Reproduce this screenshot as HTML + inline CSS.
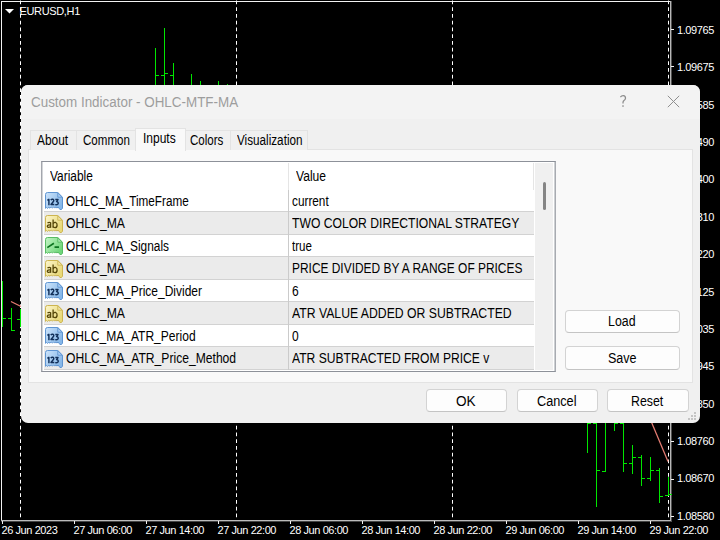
<!DOCTYPE html>
<html><head><meta charset="utf-8">
<style>
*{margin:0;padding:0;box-sizing:border-box}
html,body{width:720px;height:540px;overflow:hidden;background:#000}
body{position:relative;font-family:"Liberation Sans",sans-serif}
.abs{position:absolute}
.t{position:absolute;white-space:nowrap}
.ic{position:absolute}
svg.chart{position:absolute;left:0;top:0}
.btn{position:absolute;background:#fdfdfd;border:1px solid #d3d3d3;border-bottom-color:#c4c4c4;border-radius:4px}
</style></head><body>
<svg class="chart" width="720" height="540" viewBox="0 0 720 540">
<g fill="#f2f2f2" shape-rendering="crispEdges">
<rect x="1" y="1" width="670" height="1"/>
<rect x="1" y="1" width="1" height="520"/>
<rect x="670" y="1" width="1" height="521" fill="#b8b8b8"/>
<rect x="671" y="1" width="1" height="521" fill="#505050"/>
<rect x="1" y="520" width="670" height="1" fill="#bbbbbb"/>
<rect x="1" y="521" width="670" height="1" fill="#454545"/>
<rect x="671" y="29" width="3" height="1"/><rect x="671" y="66" width="3" height="1"/><rect x="671" y="104" width="3" height="1"/><rect x="671" y="141" width="3" height="1"/><rect x="671" y="179" width="3" height="1"/><rect x="671" y="216" width="3" height="1"/><rect x="671" y="254" width="3" height="1"/><rect x="671" y="291" width="3" height="1"/><rect x="671" y="329" width="3" height="1"/><rect x="671" y="366" width="3" height="1"/><rect x="671" y="404" width="3" height="1"/><rect x="671" y="441" width="3" height="1"/><rect x="671" y="479" width="3" height="1"/><rect x="671" y="516" width="3" height="1"/><rect x="2" y="521" width="1" height="3"/><rect x="74" y="521" width="1" height="3"/><rect x="146" y="521" width="1" height="3"/><rect x="218" y="521" width="1" height="3"/><rect x="290" y="521" width="1" height="3"/><rect x="362" y="521" width="1" height="3"/><rect x="434" y="521" width="1" height="3"/><rect x="506" y="521" width="1" height="3"/><rect x="578" y="521" width="1" height="3"/><rect x="650" y="521" width="1" height="3"/>
</g>
<g stroke="#fff" stroke-width="1" stroke-dasharray="3.75 3">
<line x1="20.5" y1="0.5" x2="20.5" y2="520"/>
<line x1="236.5" y1="0.5" x2="236.5" y2="520"/>
<line x1="452.5" y1="0.5" x2="452.5" y2="520"/>
<line x1="668.5" y1="0.5" x2="668.5" y2="520"/>
</g>
<g fill="#00e600" shape-rendering="crispEdges"><rect x="2" y="281" width="1" height="46"/><rect x="3" y="318" width="3" height="1"/><rect x="11" y="308" width="1" height="23"/><rect x="8" y="318" width="3" height="1"/><rect x="12" y="330" width="3" height="1"/><rect x="20" y="309" width="1" height="18"/><rect x="17" y="319" width="3" height="1"/><rect x="155" y="48" width="1" height="53"/><rect x="156" y="75" width="3" height="1"/><rect x="164" y="28" width="1" height="73"/><rect x="161" y="75" width="3" height="1"/><rect x="165" y="73" width="3" height="1"/><rect x="173" y="63" width="1" height="38"/><rect x="170" y="75" width="3" height="1"/><rect x="191" y="74" width="1" height="27"/><rect x="200" y="81" width="1" height="20"/><rect x="218" y="81" width="1" height="20"/><rect x="227" y="84" width="1" height="17"/><rect x="587" y="400" width="1" height="53"/><rect x="588" y="423" width="3" height="1"/><rect x="596" y="400" width="1" height="107"/><rect x="593" y="423" width="3" height="1"/><rect x="597" y="470" width="3" height="1"/><rect x="605" y="400" width="1" height="72"/><rect x="602" y="471" width="3" height="1"/><rect x="614" y="400" width="1" height="31"/><rect x="615" y="423" width="3" height="1"/><rect x="623" y="400" width="1" height="72"/><rect x="620" y="423" width="3" height="1"/><rect x="624" y="463" width="3" height="1"/><rect x="632" y="445" width="1" height="29"/><rect x="629" y="463" width="3" height="1"/><rect x="633" y="457" width="3" height="1"/><rect x="641" y="455" width="1" height="31"/><rect x="638" y="457" width="3" height="1"/><rect x="642" y="478" width="3" height="1"/><rect x="650" y="457" width="1" height="24"/><rect x="647" y="478" width="3" height="1"/><rect x="651" y="470" width="3" height="1"/><rect x="659" y="468" width="1" height="35"/><rect x="656" y="470" width="3" height="1"/><rect x="660" y="496" width="3" height="1"/><rect x="668" y="477" width="1" height="19"/><rect x="665" y="495" width="3" height="1"/><rect x="669" y="494" width="3" height="1"/></g>
<g stroke="#e57c72" stroke-width="1.25" fill="none">
<line x1="11" y1="301.5" x2="21" y2="306.5"/>
<line x1="651.4" y1="422" x2="668" y2="461.5"/>
</g>
<path d="M5 9 H14 L9.5 13.5 Z" fill="#fff"/>
</svg>
<div class="t" style="left:677px;top:23.19px;font-size:11px;line-height:14px;color:#fff;letter-spacing:-0.4px;">1.09765</div><div class="t" style="left:677px;top:60.19px;font-size:11px;line-height:14px;color:#fff;letter-spacing:-0.4px;">1.09675</div><div class="t" style="left:677px;top:98.19px;font-size:11px;line-height:14px;color:#fff;letter-spacing:-0.4px;">1.09585</div><div class="t" style="left:677px;top:135.19px;font-size:11px;line-height:14px;color:#fff;letter-spacing:-0.4px;">1.09490</div><div class="t" style="left:677px;top:172.19px;font-size:11px;line-height:14px;color:#fff;letter-spacing:-0.4px;">1.09400</div><div class="t" style="left:677px;top:210.19px;font-size:11px;line-height:14px;color:#fff;letter-spacing:-0.4px;">1.09310</div><div class="t" style="left:677px;top:247.19px;font-size:11px;line-height:14px;color:#fff;letter-spacing:-0.4px;">1.09220</div><div class="t" style="left:677px;top:285.19px;font-size:11px;line-height:14px;color:#fff;letter-spacing:-0.4px;">1.09125</div><div class="t" style="left:677px;top:322.19px;font-size:11px;line-height:14px;color:#fff;letter-spacing:-0.4px;">1.09035</div><div class="t" style="left:677px;top:359.19px;font-size:11px;line-height:14px;color:#fff;letter-spacing:-0.4px;">1.08945</div><div class="t" style="left:677px;top:397.19px;font-size:11px;line-height:14px;color:#fff;letter-spacing:-0.4px;">1.08850</div><div class="t" style="left:677px;top:434.19px;font-size:11px;line-height:14px;color:#fff;letter-spacing:-0.4px;">1.08760</div><div class="t" style="left:677px;top:471.19px;font-size:11px;line-height:14px;color:#fff;letter-spacing:-0.4px;">1.08670</div><div class="t" style="left:677px;top:509.19px;font-size:11px;line-height:14px;color:#fff;letter-spacing:-0.4px;">1.08580</div><div class="t" style="left:1.5px;top:523.19px;font-size:11px;line-height:14px;color:#fff;letter-spacing:-0.42px;">26 Jun 2023</div><div class="t" style="left:73.5px;top:523.19px;font-size:11px;line-height:14px;color:#fff;letter-spacing:-0.42px;">27 Jun 06:00</div><div class="t" style="left:145.5px;top:523.19px;font-size:11px;line-height:14px;color:#fff;letter-spacing:-0.42px;">27 Jun 14:00</div><div class="t" style="left:217.5px;top:523.19px;font-size:11px;line-height:14px;color:#fff;letter-spacing:-0.42px;">27 Jun 22:00</div><div class="t" style="left:289.5px;top:523.19px;font-size:11px;line-height:14px;color:#fff;letter-spacing:-0.42px;">28 Jun 06:00</div><div class="t" style="left:361.5px;top:523.19px;font-size:11px;line-height:14px;color:#fff;letter-spacing:-0.42px;">28 Jun 14:00</div><div class="t" style="left:433.5px;top:523.19px;font-size:11px;line-height:14px;color:#fff;letter-spacing:-0.42px;">28 Jun 22:00</div><div class="t" style="left:505.5px;top:523.19px;font-size:11px;line-height:14px;color:#fff;letter-spacing:-0.42px;">29 Jun 06:00</div><div class="t" style="left:577.5px;top:523.19px;font-size:11px;line-height:14px;color:#fff;letter-spacing:-0.42px;">29 Jun 14:00</div><div class="t" style="left:649.5px;top:523.19px;font-size:11px;line-height:14px;color:#fff;letter-spacing:-0.42px;">29 Jun 22:00</div><div class="t" style="left:19.5px;top:4.19px;font-size:11px;line-height:14px;color:#fff;letter-spacing:-0.35px;">EURUSD,H1</div>
<div class="abs" style="left:21px;top:85px;width:679px;height:338px;background:#f0f0f0;border-radius:7px;overflow:hidden">
 <div class="abs" style="left:0;top:0;width:679px;height:34px;background:#f3f3f3"></div>
</div>
<div class="t" style="left:30.5px;top:93.15px;font-size:14px;line-height:18px;color:#9d9d9d;transform:scaleX(0.9577);transform-origin:0 0;">Custom Indicator - OHLC-MTF-MA</div>
<svg class="abs" style="left:618px;top:94px" width="10" height="14" viewBox="0 0 10 14"><path d="M2.4 3.2 Q3.6 1.6 5.3 1.7 Q7.6 2 7.5 4.2 Q7.4 5.6 6 6.6 Q5 7.4 5 8.6 V9.6" stroke="#8c8c8c" stroke-width="1.25" fill="none"/><rect x="4.3" y="11.3" width="1.4" height="1.5" fill="#8c8c8c"/></svg>
<svg class="abs" style="left:667px;top:95px" width="13" height="13" viewBox="0 0 13 13"><path d="M0.8 0.8 L12.2 12.2 M12.2 0.8 L0.8 12.2" stroke="#8e8e8e" stroke-width="1"/></svg>
<!-- panel -->
<div class="abs" style="left:28px;top:149px;width:665px;height:234px;background:#f9f9f9;border:1px solid #e3e3e3"></div>
<!-- tabs -->
<div class="abs" style="left:30px;top:130px;width:47px;height:20px;background:#f0f0f0;border:1px solid #e3e3e3;border-bottom:none"></div>
<div class="abs" style="left:76px;top:130px;width:60px;height:20px;background:#f0f0f0;border:1px solid #e3e3e3;border-bottom:none"></div>
<div class="abs" style="left:185px;top:130px;width:46px;height:20px;background:#f0f0f0;border:1px solid #e3e3e3;border-bottom:none"></div>
<div class="abs" style="left:230px;top:130px;width:78px;height:20px;background:#f0f0f0;border:1px solid #e3e3e3;border-bottom:none"></div>
<div class="abs" style="left:135px;top:128px;width:51px;height:23px;background:#f9f9f9;border:1px solid #e3e3e3;border-bottom:none"></div>
<div class="t" style="left:36.6px;top:131.15px;font-size:14px;line-height:18px;color:#000;transform:scaleX(0.8501);transform-origin:0 0;">About</div>
<div class="t" style="left:83px;top:131.15px;font-size:14px;line-height:18px;color:#000;transform:scaleX(0.8258);transform-origin:0 0;">Common</div>
<div class="t" style="left:143.4px;top:129.15px;font-size:14px;line-height:18px;color:#000;transform:scaleX(0.8574);transform-origin:0 0;">Inputs</div>
<div class="t" style="left:190px;top:131.15px;font-size:14px;line-height:18px;color:#000;transform:scaleX(0.8256);transform-origin:0 0;">Colors</div>
<div class="t" style="left:237.3px;top:131.15px;font-size:14px;line-height:18px;color:#000;transform:scaleX(0.836);transform-origin:0 0;">Visualization</div>
<!-- list -->
<div class="abs" style="left:41px;top:161px;width:515px;height:211px;background:#fff;border:1px solid #8d9199;border-left-color:#a3a6ad;border-right-color:#a8abb1;box-shadow:inset 1px 0 0 #d3d5d8,inset -1px 0 0 #cdd0d3"></div>
<div class="abs" style="left:288px;top:163px;width:1px;height:27px;background:#e5e5e5"></div>
<div class="abs" style="left:533px;top:163px;width:1px;height:27px;background:#e5e5e5"></div>
<div class="t" style="left:49.6px;top:167.15px;font-size:14px;line-height:18px;color:#000;transform:scaleX(0.8505);transform-origin:0 0;">Variable</div>
<div class="t" style="left:295.6px;top:167.15px;font-size:14px;line-height:18px;color:#000;transform:scaleX(0.8629);transform-origin:0 0;">Value</div>
<div class="abs" style="left:44px;top:211px;width:490px;height:24px;background:#ebebeb;border-top:1px solid #d2d2d2;border-bottom:1px solid #d2d2d2"></div><div class="abs" style="left:44px;top:256px;width:490px;height:24px;background:#ebebeb;border-top:1px solid #d2d2d2;border-bottom:1px solid #d2d2d2"></div><div class="abs" style="left:44px;top:301px;width:490px;height:24px;background:#ebebeb;border-top:1px solid #d2d2d2;border-bottom:1px solid #d2d2d2"></div><div class="abs" style="left:44px;top:346px;width:490px;height:24px;background:#ebebeb;border-top:1px solid #d2d2d2;border-bottom:1px solid #d2d2d2"></div><svg class="ic" style="left:45px;top:192px" width="18" height="18" viewBox="0 0 18 18"><defs><linearGradient id="gn192" x1="0" y1="0" x2="1" y2="0.6"><stop offset="0" stop-color="#cde4fb"/><stop offset="1" stop-color="#86b7e8"/></linearGradient></defs><path d="M0.5 2.5 Q0.5 0.5 2.5 0.5 H12.8 L17.5 5.2 V16.2 L16.6 17.4 L15 17.6 L14 16.2 L13 15 L11.9 16.1 L10.9 14.9 L9.8 16.1 L8.6 14.9 L7.4 16.1 L6.2 15 L5 16.2 L3.8 15.2 L2.6 16.4 L1.5 15.4 L0.5 16.4 Z" fill="url(#gn192)" stroke="#5f95d2" stroke-width="1"/><path d="M12.8 0.9 V5.2 H17.1 Z" fill="#b0d0f2" stroke="#5f95d2" stroke-width="0.9" stroke-linejoin="round"/><g stroke="#12305a" stroke-width="1.45" fill="none" stroke-linejoin="round"><path d="M2.4 8.3 L3.9 7.3 V13.2"/><path d="M5.7 8.1 Q6.6 7.1 7.8 7.3 Q9.2 7.7 8.6 9.2 L6 12.5 H9.3"/><path d="M10.3 7.5 H13 L11.6 9.6 Q13.4 9.8 13.2 11.6 Q12.8 13.1 10.2 12.6"/></g></svg><div class="t" style="left:66.3px;top:192.15px;font-size:14px;line-height:18px;color:#000;transform:scaleX(0.8375);transform-origin:0 0;">OHLC_MA_TimeFrame</div><div class="t" style="left:292px;top:192.15px;font-size:14px;line-height:18px;color:#000;transform:scaleX(0.8423);transform-origin:0 0;">current</div><svg class="ic" style="left:45px;top:215px" width="18" height="18" viewBox="0 0 18 18"><defs><linearGradient id="gab215" x1="0" y1="0" x2="1" y2="0.6"><stop offset="0" stop-color="#fcf5cc"/><stop offset="1" stop-color="#e8d877"/></linearGradient></defs><path d="M0.5 2.5 Q0.5 0.5 2.5 0.5 H12.8 L17.5 5.2 V16.2 L16.6 17.4 L15 17.6 L14 16.2 L13 15 L11.9 16.1 L10.9 14.9 L9.8 16.1 L8.6 14.9 L7.4 16.1 L6.2 15 L5 16.2 L3.8 15.2 L2.6 16.4 L1.5 15.4 L0.5 16.4 Z" fill="url(#gab215)" stroke="#cdb550" stroke-width="1"/><path d="M12.8 0.9 V5.2 H17.1 Z" fill="#f2e8b0" stroke="#cdb550" stroke-width="0.9" stroke-linejoin="round"/><g stroke="#564709" stroke-width="1.3" fill="none"><path d="M2.5 7.9 Q4.3 6.9 5.6 7.8 V12.8"/><path d="M5.6 9.8 Q2.3 9.6 2.3 11.3 Q2.6 13 5.6 11.9"/><path d="M8.1 4.6 V12.7"/><path d="M8.1 8.6 Q9.2 7.1 10.7 7.5 Q12.2 8.1 12.1 10.1 Q11.9 12.7 9.9 12.7 Q8.6 12.7 8.1 11.6"/></g></svg><div class="t" style="left:66.3px;top:214.15px;font-size:14px;line-height:18px;color:#000;transform:scaleX(0.8717);transform-origin:0 0;">OHLC_MA</div><div class="t" style="left:292px;top:214.15px;font-size:14px;line-height:18px;color:#000;transform:scaleX(0.8673);transform-origin:0 0;">TWO COLOR DIRECTIONAL STRATEGY</div><svg class="ic" style="left:45px;top:237px" width="18" height="18" viewBox="0 0 18 18"><defs><linearGradient id="gb237" x1="0" y1="0" x2="1" y2="0.6"><stop offset="0" stop-color="#c4f5c6"/><stop offset="1" stop-color="#6fd67a"/></linearGradient></defs><path d="M0.5 2.5 Q0.5 0.5 2.5 0.5 H12.8 L17.5 5.2 V16.2 L16.6 17.4 L15 17.6 L14 16.2 L13 15 L11.9 16.1 L10.9 14.9 L9.8 16.1 L8.6 14.9 L7.4 16.1 L6.2 15 L5 16.2 L3.8 15.2 L2.6 16.4 L1.5 15.4 L0.5 16.4 Z" fill="url(#gb237)" stroke="#58bc64" stroke-width="1"/><path d="M12.8 0.9 V5.2 H17.1 Z" fill="#aee9b2" stroke="#58bc64" stroke-width="0.9" stroke-linejoin="round"/><path d="M2.3 10.6 L8.9 6.3 M10.4 9.3 V10.2 H14" stroke="#0d7420" stroke-width="1.7" fill="none"/></svg><div class="t" style="left:66.3px;top:237.15px;font-size:14px;line-height:18px;color:#000;transform:scaleX(0.8485);transform-origin:0 0;">OHLC_MA_Signals</div><div class="t" style="left:292px;top:237.15px;font-size:14px;line-height:18px;color:#000;transform:scaleX(0.8249);transform-origin:0 0;">true</div><svg class="ic" style="left:45px;top:260px" width="18" height="18" viewBox="0 0 18 18"><defs><linearGradient id="gab260" x1="0" y1="0" x2="1" y2="0.6"><stop offset="0" stop-color="#fcf5cc"/><stop offset="1" stop-color="#e8d877"/></linearGradient></defs><path d="M0.5 2.5 Q0.5 0.5 2.5 0.5 H12.8 L17.5 5.2 V16.2 L16.6 17.4 L15 17.6 L14 16.2 L13 15 L11.9 16.1 L10.9 14.9 L9.8 16.1 L8.6 14.9 L7.4 16.1 L6.2 15 L5 16.2 L3.8 15.2 L2.6 16.4 L1.5 15.4 L0.5 16.4 Z" fill="url(#gab260)" stroke="#cdb550" stroke-width="1"/><path d="M12.8 0.9 V5.2 H17.1 Z" fill="#f2e8b0" stroke="#cdb550" stroke-width="0.9" stroke-linejoin="round"/><g stroke="#564709" stroke-width="1.3" fill="none"><path d="M2.5 7.9 Q4.3 6.9 5.6 7.8 V12.8"/><path d="M5.6 9.8 Q2.3 9.6 2.3 11.3 Q2.6 13 5.6 11.9"/><path d="M8.1 4.6 V12.7"/><path d="M8.1 8.6 Q9.2 7.1 10.7 7.5 Q12.2 8.1 12.1 10.1 Q11.9 12.7 9.9 12.7 Q8.6 12.7 8.1 11.6"/></g></svg><div class="t" style="left:66.3px;top:259.15px;font-size:14px;line-height:18px;color:#000;transform:scaleX(0.8717);transform-origin:0 0;">OHLC_MA</div><div class="t" style="left:292px;top:259.15px;font-size:14px;line-height:18px;color:#000;transform:scaleX(0.8517);transform-origin:0 0;">PRICE DIVIDED BY A RANGE OF PRICES</div><svg class="ic" style="left:45px;top:282px" width="18" height="18" viewBox="0 0 18 18"><defs><linearGradient id="gn282" x1="0" y1="0" x2="1" y2="0.6"><stop offset="0" stop-color="#cde4fb"/><stop offset="1" stop-color="#86b7e8"/></linearGradient></defs><path d="M0.5 2.5 Q0.5 0.5 2.5 0.5 H12.8 L17.5 5.2 V16.2 L16.6 17.4 L15 17.6 L14 16.2 L13 15 L11.9 16.1 L10.9 14.9 L9.8 16.1 L8.6 14.9 L7.4 16.1 L6.2 15 L5 16.2 L3.8 15.2 L2.6 16.4 L1.5 15.4 L0.5 16.4 Z" fill="url(#gn282)" stroke="#5f95d2" stroke-width="1"/><path d="M12.8 0.9 V5.2 H17.1 Z" fill="#b0d0f2" stroke="#5f95d2" stroke-width="0.9" stroke-linejoin="round"/><g stroke="#12305a" stroke-width="1.45" fill="none" stroke-linejoin="round"><path d="M2.4 8.3 L3.9 7.3 V13.2"/><path d="M5.7 8.1 Q6.6 7.1 7.8 7.3 Q9.2 7.7 8.6 9.2 L6 12.5 H9.3"/><path d="M10.3 7.5 H13 L11.6 9.6 Q13.4 9.8 13.2 11.6 Q12.8 13.1 10.2 12.6"/></g></svg><div class="t" style="left:66.3px;top:282.15px;font-size:14px;line-height:18px;color:#000;transform:scaleX(0.8569);transform-origin:0 0;">OHLC_MA_Price_Divider</div><div class="t" style="left:292px;top:282.15px;font-size:14px;line-height:18px;color:#000;transform:scaleX(0.86);transform-origin:0 0;">6</div><svg class="ic" style="left:45px;top:305px" width="18" height="18" viewBox="0 0 18 18"><defs><linearGradient id="gab305" x1="0" y1="0" x2="1" y2="0.6"><stop offset="0" stop-color="#fcf5cc"/><stop offset="1" stop-color="#e8d877"/></linearGradient></defs><path d="M0.5 2.5 Q0.5 0.5 2.5 0.5 H12.8 L17.5 5.2 V16.2 L16.6 17.4 L15 17.6 L14 16.2 L13 15 L11.9 16.1 L10.9 14.9 L9.8 16.1 L8.6 14.9 L7.4 16.1 L6.2 15 L5 16.2 L3.8 15.2 L2.6 16.4 L1.5 15.4 L0.5 16.4 Z" fill="url(#gab305)" stroke="#cdb550" stroke-width="1"/><path d="M12.8 0.9 V5.2 H17.1 Z" fill="#f2e8b0" stroke="#cdb550" stroke-width="0.9" stroke-linejoin="round"/><g stroke="#564709" stroke-width="1.3" fill="none"><path d="M2.5 7.9 Q4.3 6.9 5.6 7.8 V12.8"/><path d="M5.6 9.8 Q2.3 9.6 2.3 11.3 Q2.6 13 5.6 11.9"/><path d="M8.1 4.6 V12.7"/><path d="M8.1 8.6 Q9.2 7.1 10.7 7.5 Q12.2 8.1 12.1 10.1 Q11.9 12.7 9.9 12.7 Q8.6 12.7 8.1 11.6"/></g></svg><div class="t" style="left:66.3px;top:304.15px;font-size:14px;line-height:18px;color:#000;transform:scaleX(0.8717);transform-origin:0 0;">OHLC_MA</div><div class="t" style="left:292px;top:304.15px;font-size:14px;line-height:18px;color:#000;transform:scaleX(0.8732);transform-origin:0 0;">ATR VALUE ADDED OR SUBTRACTED</div><svg class="ic" style="left:45px;top:327px" width="18" height="18" viewBox="0 0 18 18"><defs><linearGradient id="gn327" x1="0" y1="0" x2="1" y2="0.6"><stop offset="0" stop-color="#cde4fb"/><stop offset="1" stop-color="#86b7e8"/></linearGradient></defs><path d="M0.5 2.5 Q0.5 0.5 2.5 0.5 H12.8 L17.5 5.2 V16.2 L16.6 17.4 L15 17.6 L14 16.2 L13 15 L11.9 16.1 L10.9 14.9 L9.8 16.1 L8.6 14.9 L7.4 16.1 L6.2 15 L5 16.2 L3.8 15.2 L2.6 16.4 L1.5 15.4 L0.5 16.4 Z" fill="url(#gn327)" stroke="#5f95d2" stroke-width="1"/><path d="M12.8 0.9 V5.2 H17.1 Z" fill="#b0d0f2" stroke="#5f95d2" stroke-width="0.9" stroke-linejoin="round"/><g stroke="#12305a" stroke-width="1.45" fill="none" stroke-linejoin="round"><path d="M2.4 8.3 L3.9 7.3 V13.2"/><path d="M5.7 8.1 Q6.6 7.1 7.8 7.3 Q9.2 7.7 8.6 9.2 L6 12.5 H9.3"/><path d="M10.3 7.5 H13 L11.6 9.6 Q13.4 9.8 13.2 11.6 Q12.8 13.1 10.2 12.6"/></g></svg><div class="t" style="left:66.3px;top:327.15px;font-size:14px;line-height:18px;color:#000;transform:scaleX(0.8601);transform-origin:0 0;">OHLC_MA_ATR_Period</div><div class="t" style="left:292px;top:327.15px;font-size:14px;line-height:18px;color:#000;transform:scaleX(0.86);transform-origin:0 0;">0</div><svg class="ic" style="left:45px;top:350px" width="18" height="18" viewBox="0 0 18 18"><defs><linearGradient id="gn350" x1="0" y1="0" x2="1" y2="0.6"><stop offset="0" stop-color="#cde4fb"/><stop offset="1" stop-color="#86b7e8"/></linearGradient></defs><path d="M0.5 2.5 Q0.5 0.5 2.5 0.5 H12.8 L17.5 5.2 V16.2 L16.6 17.4 L15 17.6 L14 16.2 L13 15 L11.9 16.1 L10.9 14.9 L9.8 16.1 L8.6 14.9 L7.4 16.1 L6.2 15 L5 16.2 L3.8 15.2 L2.6 16.4 L1.5 15.4 L0.5 16.4 Z" fill="url(#gn350)" stroke="#5f95d2" stroke-width="1"/><path d="M12.8 0.9 V5.2 H17.1 Z" fill="#b0d0f2" stroke="#5f95d2" stroke-width="0.9" stroke-linejoin="round"/><g stroke="#12305a" stroke-width="1.45" fill="none" stroke-linejoin="round"><path d="M2.4 8.3 L3.9 7.3 V13.2"/><path d="M5.7 8.1 Q6.6 7.1 7.8 7.3 Q9.2 7.7 8.6 9.2 L6 12.5 H9.3"/><path d="M10.3 7.5 H13 L11.6 9.6 Q13.4 9.8 13.2 11.6 Q12.8 13.1 10.2 12.6"/></g></svg><div class="t" style="left:66.3px;top:349.15px;font-size:14px;line-height:18px;color:#000;transform:scaleX(0.8652);transform-origin:0 0;">OHLC_MA_ATR_Price_Method</div><div class="t" style="left:292px;top:349.15px;font-size:14px;line-height:18px;color:#000;transform:scaleX(0.8638);transform-origin:0 0;">ATR SUBTRACTED FROM PRICE v</div>
<div class="abs" style="left:288px;top:190px;width:1px;height:180px;background:#cbcbcb"></div>
<div class="abs" style="left:535px;top:163px;width:18px;height:207px;background:#f0f0f0"></div>
<div class="abs" style="left:543px;top:182px;width:3px;height:28px;background:#858585;border-radius:1.5px"></div>
<!-- buttons -->
<div class="btn" style="left:565px;top:310px;width:115px;height:23px"></div>
<div class="btn" style="left:565px;top:346px;width:115px;height:24px"></div>
<div class="btn" style="left:426px;top:389px;width:81px;height:23px"></div>
<div class="btn" style="left:517px;top:389px;width:81px;height:23px"></div>
<div class="btn" style="left:607px;top:389px;width:82px;height:23px"></div>
<div class="t" style="left:607.5px;top:312.15px;font-size:14px;line-height:18px;color:#000;transform:scaleX(0.883);transform-origin:0 0;">Load</div>
<div class="t" style="left:607.8px;top:349.15px;font-size:14px;line-height:18px;color:#000;transform:scaleX(0.8963);transform-origin:0 0;">Save</div>
<div class="t" style="left:456px;top:392.15px;font-size:14px;line-height:18px;color:#000;transform:scaleX(0.969);transform-origin:0 0;">OK</div>
<div class="t" style="left:536.5px;top:392.15px;font-size:14px;line-height:18px;color:#000;transform:scaleX(0.9064);transform-origin:0 0;">Cancel</div>
<div class="t" style="left:631px;top:392.15px;font-size:14px;line-height:18px;color:#000;transform:scaleX(0.8804);transform-origin:0 0;">Reset</div>
<div class="abs" style="left:694px;top:412px;width:2px;height:2px;background:#c4c4c4"></div><div class="abs" style="left:691px;top:415px;width:2px;height:2px;background:#c4c4c4"></div><div class="abs" style="left:694px;top:415px;width:2px;height:2px;background:#c4c4c4"></div><div class="abs" style="left:688px;top:418px;width:2px;height:2px;background:#c4c4c4"></div><div class="abs" style="left:691px;top:418px;width:2px;height:2px;background:#c4c4c4"></div><div class="abs" style="left:694px;top:418px;width:2px;height:2px;background:#c4c4c4"></div>
</body></html>
